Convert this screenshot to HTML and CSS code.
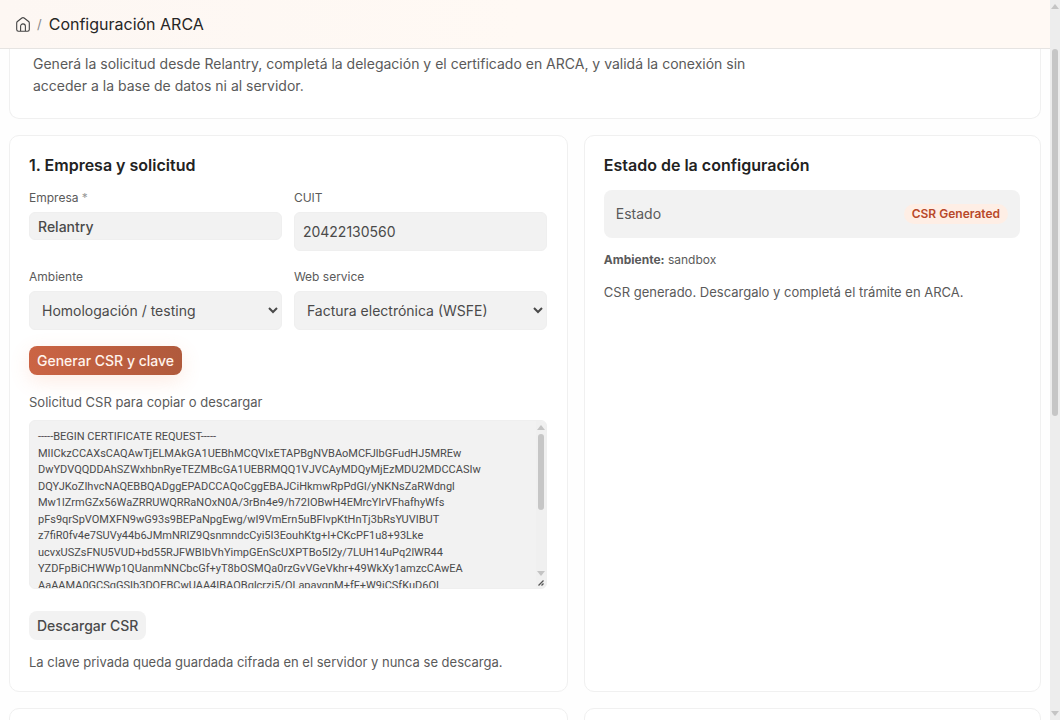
FILE: index.html
```html
<!DOCTYPE html>
<html lang="es">
<head>
  <meta charset="UTF-8" />
  <meta name="viewport" content="width=device-width, initial-scale=1.0" />
  <title>Configuración ARCA</title>
  <link rel="stylesheet" href="styles.css">
</head>
<body>
  <div class="app">
    <div class="page">
      <header class="topbar">
        <a href="#" class="home" aria-label="Inicio">
          <svg width="14" height="15" viewBox="0 0 14 15" fill="none" stroke="currentColor" stroke-width="1.1" stroke-linejoin="round">
            <path d="M.7 5.9c0-.6.2-1 .7-1.4L5.9 1c.7-.5 1.500-.5 2.200 0l4.500 3.500c.5.4.7.8.7 1.400v6.600c0 1-.7 1.700-1.700 1.700H2.400c-1 0-1.700-.7-1.700-1.700z" />
            <path d="M4.600 14V9.300c0-1.400 1-2.400 2.400-2.400s2.400 1 2.400 2.400V14" />
          </svg>
        </a>
        <span class="sep">/</span>
        <h1>Configuración ARCA</h1>
      </header>

      <main class="content">
        <section class="card intro">
          <p>Generá la solicitud desde Relantry, completá la delegación y el certificado en ARCA, y validá la conexión sin acceder a la base de datos ni al servidor.</p>
        </section>

        <div class="columns">
          <section class="card">
            <h2>1. Empresa y solicitud</h2>
            <form class="fields">
              <div class="field">
                <label for="company">Empresa <span class="required">*</span></label>
                <input id="company" class="compact" type="text" value="Relantry" />
              </div>
              <div class="field">
                <label for="cuit">CUIT</label>
                <input id="cuit" type="text" value="20422130560" />
              </div>
              <div class="field">
                <label for="environment">Ambiente</label>
                <select id="environment">
                  <option>Homologación / testing</option>
                  <option>Producción</option>
                </select>
              </div>
              <div class="field">
                <label for="service">Web service</label>
                <select id="service">
                  <option>Factura electrónica (WSFE)</option>
                </select>
              </div>
            </form>
            <button class="btn primary" type="button">Generar CSR y clave</button>

            <label class="csr-label" for="csr">Solicitud CSR para copiar o descargar</label>
            <div class="csr-box">
              <textarea id="csr" readonly spellcheck="false">-----BEGIN CERTIFICATE REQUEST-----
MIICkzCCAXsCAQAwTjELMAkGA1UEBhMCQVIxETAPBgNVBAoMCFJlbGFudHJ5MREw
DwYDVQQDDAhSZWxhbnRyeTEZMBcGA1UEBRMQQ1VJVCAyMDQyMjEzMDU2MDCCASIw
DQYJKoZIhvcNAQEBBQADggEPADCCAQoCggEBAJCiHkmwRpPdGl/yNKNsZaRWdngl
Mw1lZrmGZx56WaZRRUWQRRaNOxN0A/3rBn4e9/h72IOBwH4EMrcYlrVFhafhyWfs
pFs9qrSpVOMXFN9wG93s9BEPaNpgEwg/wI9VmErn5uBFIvpKtHnTj3bRsYUVIBUT
z7fiR0fv4e7SUVy44b6JMmNRIZ9QsnmndcCyi5I3EouhKtg+I+CKcPF1u8+93Lke
ucvxUSZsFNU5VUD+bd55RJFWBIbVhYimpGEnScUXPTBo5I2y/7LUH14uPq2lWR44
YZDFpBiCHWWp1QUanmNNCbcGf+yT8bOSMQa0rzGvVGeVkhr+49WkXy1amzcCAwEA
AaAAMA0GCSqGSIb3DQEBCwUAA4IBAQBqlcrzi5/QLapavqnM+fF+W9iCSfKuD6OI</textarea>
              <div class="scrollbar">
                <span class="arrow up"></span>
                <span class="thumb csr-thumb"></span>
                <span class="arrow down"></span>
                <svg class="grip" width="10" height="12" viewBox="0 0 10 12" stroke="#555" stroke-width="1.3" fill="none">
                  <path d="M2.500 9.500l5-5M5.500 9.500l2-2" />
                </svg>
              </div>
            </div>

            <button class="btn" type="button">Descargar CSR</button>
            <p class="note">La clave privada queda guardada cifrada en el servidor y nunca se descarga.</p>
          </section>

          <section class="card">
            <h2>Estado de la configuración</h2>
            <div class="status">
              <span>Estado</span>
              <span class="badge">CSR Generated</span>
            </div>
            <p class="environment"><strong>Ambiente:</strong> sandbox</p>
            <p class="message">CSR generado. Descargalo y completá el trámite en ARCA.</p>
          </section>

          <section class="card next"></section>
          <section class="card next"></section>
        </div>
      </main>
    </div>

    <div class="scrollbar page-scrollbar">
      <span class="arrow up"></span>
      <span class="thumb page-thumb"></span>
      <span class="arrow down"></span>
    </div>
  </div>
</body>
</html>
```
FILE: styles.css
```css
* { box-sizing: border-box; }
body {
  margin: 0;
  font-family: Inter, sans-serif;
  font-size: 13px;
  line-height: 20px;
  color: #5a5a5a;
  background: #fefefe;
}
h1, h2, p { margin: 0; }
button, input, select, textarea {
  font-family: inherit;
  color: #4a4a4a;
}

.app {
  display: flex;
  height: 100vh;
  overflow: hidden;
}
.page {
  flex: 1;
  min-width: 0;
}

/* top bar */
.topbar {
  display: flex;
  align-items: center;
  gap: 7px;
  height: 49px;
  padding: 0 16px;
  background: linear-gradient(90deg, #fdf7f3, #fff9f4 50%);
  border-bottom: 1px solid #e6e4e2;
}
.home {
  display: flex;
  color: #444;
}
.sep { color: #888; }
h1 {
  font-size: 16px;
  font-weight: 400;
  color: #262626;
}

/* cards */
.content { padding: 0 9px; }
.card {
  padding: 18px 20px 19px 19px;
  background: #fff;
  border: 1px solid #f0f0f0;
  border-radius: 10px;
}
.intro {
  padding: 4px 23px 21px;
  border-top: 0;
  border-radius: 0 0 10px 10px;
  font-size: 14px;
  line-height: 22px;
}
.intro p { max-width: 740px; }
.columns {
  display: grid;
  grid-template-columns: 11fr 9fr;
  gap: 16px;
  margin-top: 16px;
}
h2 {
  margin-bottom: 12px;
  font-size: 16px;
  line-height: 22px;
  font-weight: 600;
  color: #222;
}
.next { height: 120px; }

/* form */
.fields {
  display: grid;
  grid-template-columns: 1fr 1fr;
  gap: 16px 12px;
  margin-bottom: 16px;
}
.field label {
  display: block;
  margin-bottom: 4px;
  font-size: 12px;
}
.required { color: #999; }
.field input,
.field select {
  display: block;
  width: 100%;
  height: 39px;
  padding: 0 8px;
  font-size: 14px;
  background: #f2f2f2;
  border: 1px solid #efefef;
  border-radius: 6px;
}
.field .compact {
  height: 28px;
  font-weight: 500;
}
.btn {
  display: block;
  height: 29px;
  padding: 0 8px;
  font-size: 14px;
  font-weight: 500;
  background: #f2f2f2;
  border: 0;
  border-radius: 8px;
}
.primary {
  color: #fff3ec;
  background: linear-gradient(90deg, #cb6444, #b05a3c);
  box-shadow: 0 6px 20px rgba(240, 130, 80, 0.16);
}

/* CSR */
.csr-label {
  display: block;
  margin: 17px 0 8px;
}
.csr-box {
  display: flex;
  height: 169px;
  margin-bottom: 22px;
  overflow: hidden;
  background: #f2f2f2;
  border: 1px solid #efefef;
  border-radius: 6px;
}
.csr-box textarea {
  flex: 1;
  min-width: 0;
  padding: 8px;
  font-family: Roboto, Inter, sans-serif;
  font-size: 11px;
  line-height: 1.5;
  white-space: pre;
  overflow: hidden;
  resize: none;
  background: none;
  border: 0;
}
.csr-box .scrollbar { background: #f0f0f0; }
.note { margin-top: 12px; }

/* status */
.status {
  display: flex;
  align-items: center;
  justify-content: space-between;
  height: 48px;
  margin-top: 14px;
  padding: 0 12px;
  font-size: 14px;
  background: #f2f2f2;
  border-radius: 8px;
}
.badge {
  padding: 0 8px;
  font-size: 12px;
  font-weight: 600;
  color: #b8482a;
  background: #feeee5;
  border-radius: 10px;
}
.environment {
  margin: 12px 0;
  font-size: 12px;
}

/* scrollbars */
.scrollbar {
  display: flex;
  flex-direction: column;
  align-items: center;
  width: 10px;
  padding-top: 4px;
  background: #ededed;
}
.thumb {
  width: 6px;
  background: #c6c6c6;
  border-radius: 3px;
}
.arrow {
  border: 4px solid transparent;
  border-top-width: 0;
  border-bottom: 5px solid #c4c4c4;
}
.arrow.down {
  margin-top: auto;
  border-bottom-width: 0;
  border-top: 5px solid #c4c4c4;
}
.csr-thumb {
  height: 76px;
  margin-top: 4px;
}
.page-thumb {
  height: 51vh;
  margin-top: 40px;
}
.page-scrollbar { padding-bottom: 4px; }
```
